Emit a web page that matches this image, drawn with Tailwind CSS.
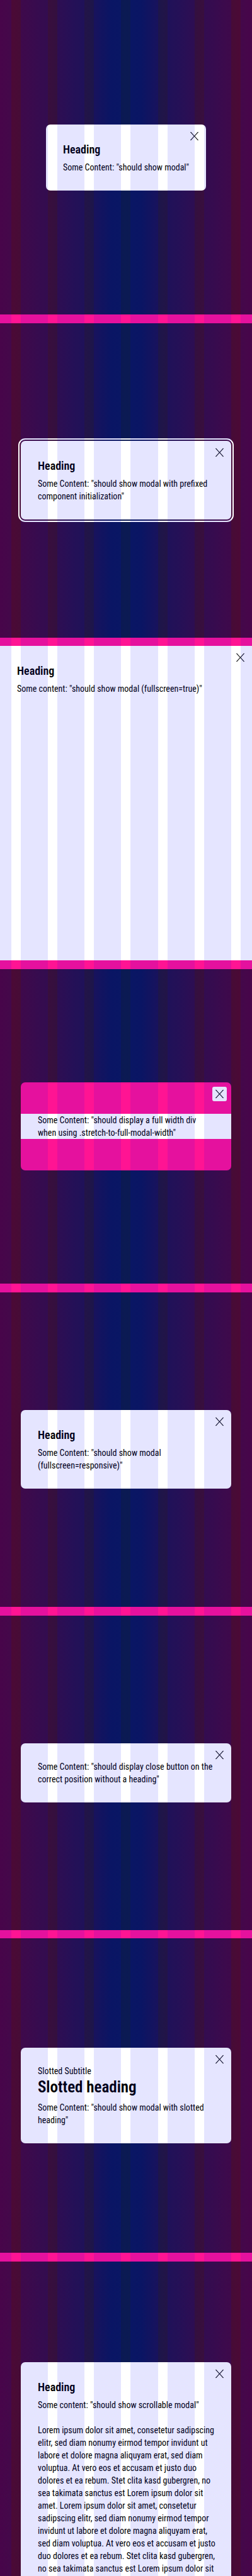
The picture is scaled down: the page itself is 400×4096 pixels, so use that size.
<!DOCTYPE html>
<html lang="en">
<head>
<meta charset="utf-8">
<meta name="viewport" content="width=device-width, initial-scale=1">
<title>Modal states</title>
<script src="https://cdn.jsdelivr.net/npm/@tailwindcss/browser@4"></script>
</head>
<body class="bg-white text-black">
<svg class="hidden" aria-hidden="true">
  <symbol id="close" viewBox="0 0 24 24"><path d="M5.2 5.2H6.5L12 11.4 17.5 5.2H18.8L12.7 12 18.8 18.8H17.5L12 12.6 6.5 18.8H5.2L11.3 12Z" fill="#010205" stroke="#010205" stroke-width="0.2"/></symbol>
</svg>
<main class="relative flex min-h-screen flex-col bg-[#ff1493] font-['Roboto_Condensed',Roboto,'Liberation_Sans',sans-serif] text-[14px] leading-[20px]">

  <section class="flex h-[500px] items-center justify-center bg-[linear-gradient(90deg,#510636,#480b36_7%,#360f3e_21%,#1f1549_36%,#0c1853_44%,#0b1a53_50%,#0c1853_56%,#1f1549_64%,#360f3e_79%,#480b36_93%,#510636)] px-[33px]">
    <div role="dialog" aria-labelledby="h1" class="relative rounded-[7px] bg-white p-[27px]">
      <button type="button" aria-label="Dismiss modal" class="absolute top-[7px] right-[7px] size-[23px] rounded-[3px] bg-white"><svg class="size-full"><use href="#close"/></svg></button>
      <h2 id="h1" class="mb-[6px] text-[18px] leading-[25px] font-semibold">Heading</h2>
      <p>Some Content: "should show modal"</p>
    </div>
  </section>
  <div class="flex-1"></div>

  <section class="flex h-[500px] items-center justify-center bg-[linear-gradient(90deg,#510636,#480b36_7%,#360f3e_21%,#1f1549_36%,#0c1853_44%,#0b1a53_50%,#0c1853_56%,#1f1549_64%,#360f3e_79%,#480b36_93%,#510636)] px-[33px]">
    <div role="dialog" aria-labelledby="h2" class="relative w-full rounded-[7px] bg-white p-[27px] outline-2 outline-offset-2 outline-white">
      <button type="button" aria-label="Dismiss modal" class="absolute top-[7px] right-[7px] size-[23px] rounded-[3px] bg-white"><svg class="size-full"><use href="#close"/></svg></button>
      <h2 id="h2" class="mb-[6px] text-[18px] leading-[25px] font-semibold">Heading</h2>
      <p>Some Content: "should show modal with prefixed component initialization"</p>
    </div>
  </section>
  <div class="flex-1"></div>

  <section class="flex h-[500px]">
    <div role="dialog" aria-labelledby="h3" class="relative w-full bg-white p-[27px]">
      <button type="button" aria-label="Dismiss modal" class="absolute top-[7px] right-[7px] size-[23px] rounded-[3px] bg-white"><svg class="size-full"><use href="#close"/></svg></button>
      <h2 id="h3" class="mb-[6px] text-[18px] leading-[25px] font-semibold">Heading</h2>
      <p>Some content: "should show modal (fullscreen=true)"</p>
    </div>
  </section>
  <div class="flex-1"></div>

  <section class="flex h-[500px] items-center justify-center bg-[linear-gradient(90deg,#510636,#480b36_7%,#360f3e_21%,#1f1549_36%,#0c1853_44%,#0b1a53_50%,#0c1853_56%,#1f1549_64%,#360f3e_79%,#480b36_93%,#510636)] px-[33px]">
    <div role="dialog" aria-label="Full width content" class="relative w-full rounded-[7px] bg-[#ff1493] py-[50px]">
      <button type="button" aria-label="Dismiss modal" class="absolute top-[7px] right-[7px] size-[23px] rounded-[3px] bg-white"><svg class="size-full"><use href="#close"/></svg></button>
      <p class="bg-white px-[27px]">Some Content: "should display a full width div<br>when using .stretch-to-full-modal-width"</p>
    </div>
  </section>
  <div class="flex-1"></div>

  <section class="flex h-[500px] items-center justify-center bg-[linear-gradient(90deg,#510636,#480b36_7%,#360f3e_21%,#1f1549_36%,#0c1853_44%,#0b1a53_50%,#0c1853_56%,#1f1549_64%,#360f3e_79%,#480b36_93%,#510636)] px-[33px]">
    <div role="dialog" aria-labelledby="h5" class="relative w-full rounded-[7px] bg-white p-[27px]">
      <button type="button" aria-label="Dismiss modal" class="absolute top-[7px] right-[7px] size-[23px] rounded-[3px] bg-white"><svg class="size-full"><use href="#close"/></svg></button>
      <h2 id="h5" class="mb-[6px] text-[18px] leading-[25px] font-semibold">Heading</h2>
      <p>Some Content: "should show modal<br>(fullscreen=responsive)"</p>
    </div>
  </section>
  <div class="flex-1"></div>

  <section class="flex h-[500px] items-center justify-center bg-[linear-gradient(90deg,#510636,#480b36_7%,#360f3e_21%,#1f1549_36%,#0c1853_44%,#0b1a53_50%,#0c1853_56%,#1f1549_64%,#360f3e_79%,#480b36_93%,#510636)] px-[33px]">
    <div role="dialog" aria-label="No heading" class="relative w-full rounded-[7px] bg-white p-[27px]">
      <button type="button" aria-label="Dismiss modal" class="absolute top-[7px] right-[7px] size-[23px] rounded-[3px] bg-white"><svg class="size-full"><use href="#close"/></svg></button>
      <p>Some Content: "should display close button on the correct position without a heading"</p>
    </div>
  </section>
  <div class="flex-1"></div>

  <section class="flex h-[500px] items-center justify-center bg-[linear-gradient(90deg,#510636,#480b36_7%,#360f3e_21%,#1f1549_36%,#0c1853_44%,#0b1a53_50%,#0c1853_56%,#1f1549_64%,#360f3e_79%,#480b36_93%,#510636)] px-[33px]">
    <div role="dialog" aria-labelledby="h7" class="relative w-full rounded-[7px] bg-white p-[27px]">
      <button type="button" aria-label="Dismiss modal" class="absolute top-[7px] right-[7px] size-[23px] rounded-[3px] bg-white"><svg class="size-full"><use href="#close"/></svg></button>
      <p>Slotted Subtitle</p>
      <h2 id="h7" class="mb-[6px] text-[25px] leading-[32px] font-semibold">Slotted heading</h2>
      <p>Some Content: "should show modal with slotted<br>heading"</p>
    </div>
  </section>
  <div class="flex-1"></div>

  <section class="flex h-[500px] justify-center overflow-hidden bg-[linear-gradient(90deg,#510636,#480b36_7%,#360f3e_21%,#1f1549_36%,#0c1853_44%,#0b1a53_50%,#0c1853_56%,#1f1549_64%,#360f3e_79%,#480b36_93%,#510636)] px-[33px] pt-[160px]">
    <div role="dialog" aria-labelledby="h8" class="relative w-full rounded-t-[7px] bg-white px-[27px] pt-[27px]">
      <button type="button" aria-label="Dismiss modal" class="absolute top-[7px] right-[7px] size-[23px] rounded-[3px] bg-white"><svg class="size-full"><use href="#close"/></svg></button>
      <h2 id="h8" class="mb-[6px] text-[18px] leading-[25px] font-semibold">Heading</h2>
      <p class="mb-[20px]">Some content: "should show scrollable modal"</p>
      <p class="whitespace-nowrap">Lorem ipsum dolor sit amet, consetetur sadipscing<br>elitr, sed diam nonumy eirmod tempor invidunt ut<br>labore et dolore magna aliquyam erat, sed diam<br>voluptua. At vero eos et accusam et justo duo<br>dolores et ea rebum. Stet clita kasd gubergren, no<br>sea takimata sanctus est Lorem ipsum dolor sit<br>amet. Lorem ipsum dolor sit amet, consetetur<br>sadipscing elitr, sed diam nonumy eirmod tempor<br>invidunt ut labore et dolore magna aliquyam erat,<br>sed diam voluptua. At vero eos et accusam et justo<br>duo dolores et ea rebum. Stet clita kasd gubergren,<br>no sea takimata sanctus est Lorem ipsum dolor sit</p>
    </div>
  </section>

  <!-- Translucent column guides over the whole page -->
  <div class="pointer-events-none absolute inset-0 flex gap-[15px]" aria-hidden="true">
    <span class="flex-[21] bg-[#0000ff]/10"></span>
    <span class="flex-[52] bg-[#0000ff]/10"></span>
    <span class="flex-[52] bg-[#0000ff]/10"></span>
    <span class="flex-[52] bg-[#0000ff]/10"></span>
    <span class="flex-[52] bg-[#0000ff]/10"></span>
    <span class="flex-[52] bg-[#0000ff]/10"></span>
    <span class="flex-[52] bg-[#0000ff]/10"></span>
    <span class="flex-[21] bg-[#0000ff]/10"></span>
  </div>
</main>
</body>
</html>
